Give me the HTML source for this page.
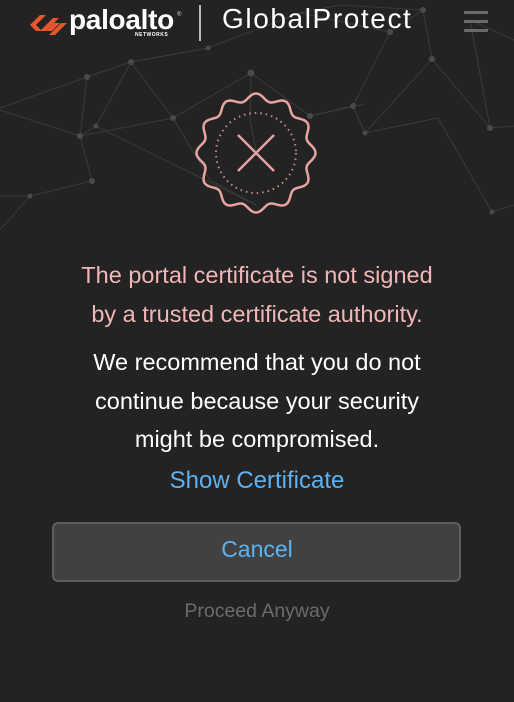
<!DOCTYPE html>
<html><head><meta charset="utf-8"><style>
html,body{margin:0;padding:0;}
body{width:514px;height:702px;background:#232323;position:relative;overflow:hidden;font-family:"Liberation Sans",sans-serif;}
.t{position:absolute;left:0;width:514px;text-align:center;font-size:23.5px;white-space:nowrap;}
.pink{color:#f2b6b6}
.white{color:#ffffff}
.blue{color:#5fb2f2}
.btn{position:absolute;left:52px;top:522px;width:405px;height:56px;background:#414141;border:2px solid #5e5e5e;border-radius:6px;}
</style></head><body>
<svg width="514" height="702" style="position:absolute;left:0;top:0" stroke="#3a3a3a" stroke-width="1" fill="none">
<g>
<polyline points="0,108 87,77 131,62 208,48 300,13 390,32"/>
<polyline points="0,110 80,136 173,118 251,73 310,116 365,104"/>
<polyline points="131,62 173,118 210,180 256,205"/>
<polyline points="87,77 80,136 92,181 30,196"/>
<polyline points="251,73 250,120 256,150"/>
<polyline points="310,116 353,106 365,133 432,59 490,128 514,126"/>
<polyline points="432,59 423,10 390,32 353,106"/>
<polyline points="208,48 131,62 96,126 80,136"/>
<polyline points="490,128 470,20 514,40"/>
<polyline points="365,133 438,118 492,212 514,205"/>
<polyline points="0,196 30,196 0,230"/>
<polyline points="300,13 340,5 423,10"/>
<polyline points="96,126 256,205"/>
</g>
<g fill="#4a4a4a" stroke="none">
<circle cx="87" cy="77" r="3"/><circle cx="131" cy="62" r="3"/><circle cx="251" cy="73" r="3.5"/><circle cx="173" cy="118" r="3"/><circle cx="80" cy="136" r="3"/><circle cx="92" cy="181" r="3"/><circle cx="310" cy="116" r="3"/><circle cx="353" cy="106" r="3"/><circle cx="432" cy="59" r="3"/><circle cx="490" cy="128" r="3"/><circle cx="365" cy="133" r="2.5"/><circle cx="423" cy="10" r="3"/><circle cx="390" cy="32" r="3"/><circle cx="30" cy="196" r="2.5"/><circle cx="96" cy="126" r="2.5"/><circle cx="208" cy="48" r="2.5"/><circle cx="492" cy="212" r="2.5"/>
</g>
</svg>
<svg width="40" height="40" style="position:absolute;left:28px;top:8px">
<g fill="#e8542b">
<polygon points="2,17 12,7 18,7 8,17"/>
<polygon points="2,17 8,17 14,23 8,23"/>
<polygon points="12,23 25,10 31,10 18,23"/>
<polygon points="18,23 24,23 32,15 26,15"/>
<polygon points="21,27 33,15 39,15 27,27"/>
</g>
</svg>
<div style="position:absolute;left:69px;top:4px;color:#fff;font-weight:bold;font-size:28px;letter-spacing:-0.3px;">paloalto</div>
<div style="position:absolute;left:177px;top:12px;color:#ccc;font-size:6px;">®</div>
<div style="position:absolute;left:135px;top:32px;color:#fff;font-weight:bold;font-size:5px;letter-spacing:0.5px;">NETWORKS</div>
<div style="position:absolute;left:199px;top:5px;width:2px;height:36px;background:#bbb;"></div>
<div style="position:absolute;left:222px;top:3px;color:#fff;font-size:28px;letter-spacing:1.6px;">GlobalProtect</div>
<div style="position:absolute;left:464px;top:11px;width:24px;height:3px;background:#6a6a6a;box-shadow:0 9px 0 #6a6a6a,0 18px 0 #6a6a6a;"></div>
<svg width="514" height="240" style="position:absolute;left:0;top:0">
<path id="wave" fill="none" stroke="#e7a3a0" stroke-width="2.5"/>
<circle cx="256" cy="153" r="40" fill="none" stroke="#c98b88" stroke-width="2" stroke-dasharray="1.5 4"/>
<path d="M238 135 L274 171 M274 135 L238 171" stroke="#e7a3a0" stroke-width="2.5" fill="none"/>
</svg>
<script>
(function(){var d="",n=12,cx=256,cy=153;for(var i=0;i<=360;i++){var a=i*Math.PI/180;var r=56+3.5*Math.cos(n*a);var x=cx+r*Math.cos(a),y=cy+r*Math.sin(a);d+=(i?"L":"M")+x.toFixed(2)+" "+y.toFixed(2);}document.getElementById("wave").setAttribute("d",d+"Z");})();
</script>
<div class="t pink" style="top:262px">The portal certificate is not signed</div>
<div class="t pink" style="top:301px">by a trusted certificate authority.</div>
<div class="t white" style="top:349px">We recommend that you do not</div>
<div class="t white" style="top:388px">continue because your security</div>
<div class="t white" style="top:426px">might be compromised.</div>
<div class="t blue" style="top:467px;font-size:24px">Show Certificate</div>
<div class="btn"></div>
<div class="t blue" style="top:536px;font-size:23px">Cancel</div>
<div class="t" style="top:600px;color:#6b6b6b;font-size:19.5px">Proceed Anyway</div>
</body></html>
